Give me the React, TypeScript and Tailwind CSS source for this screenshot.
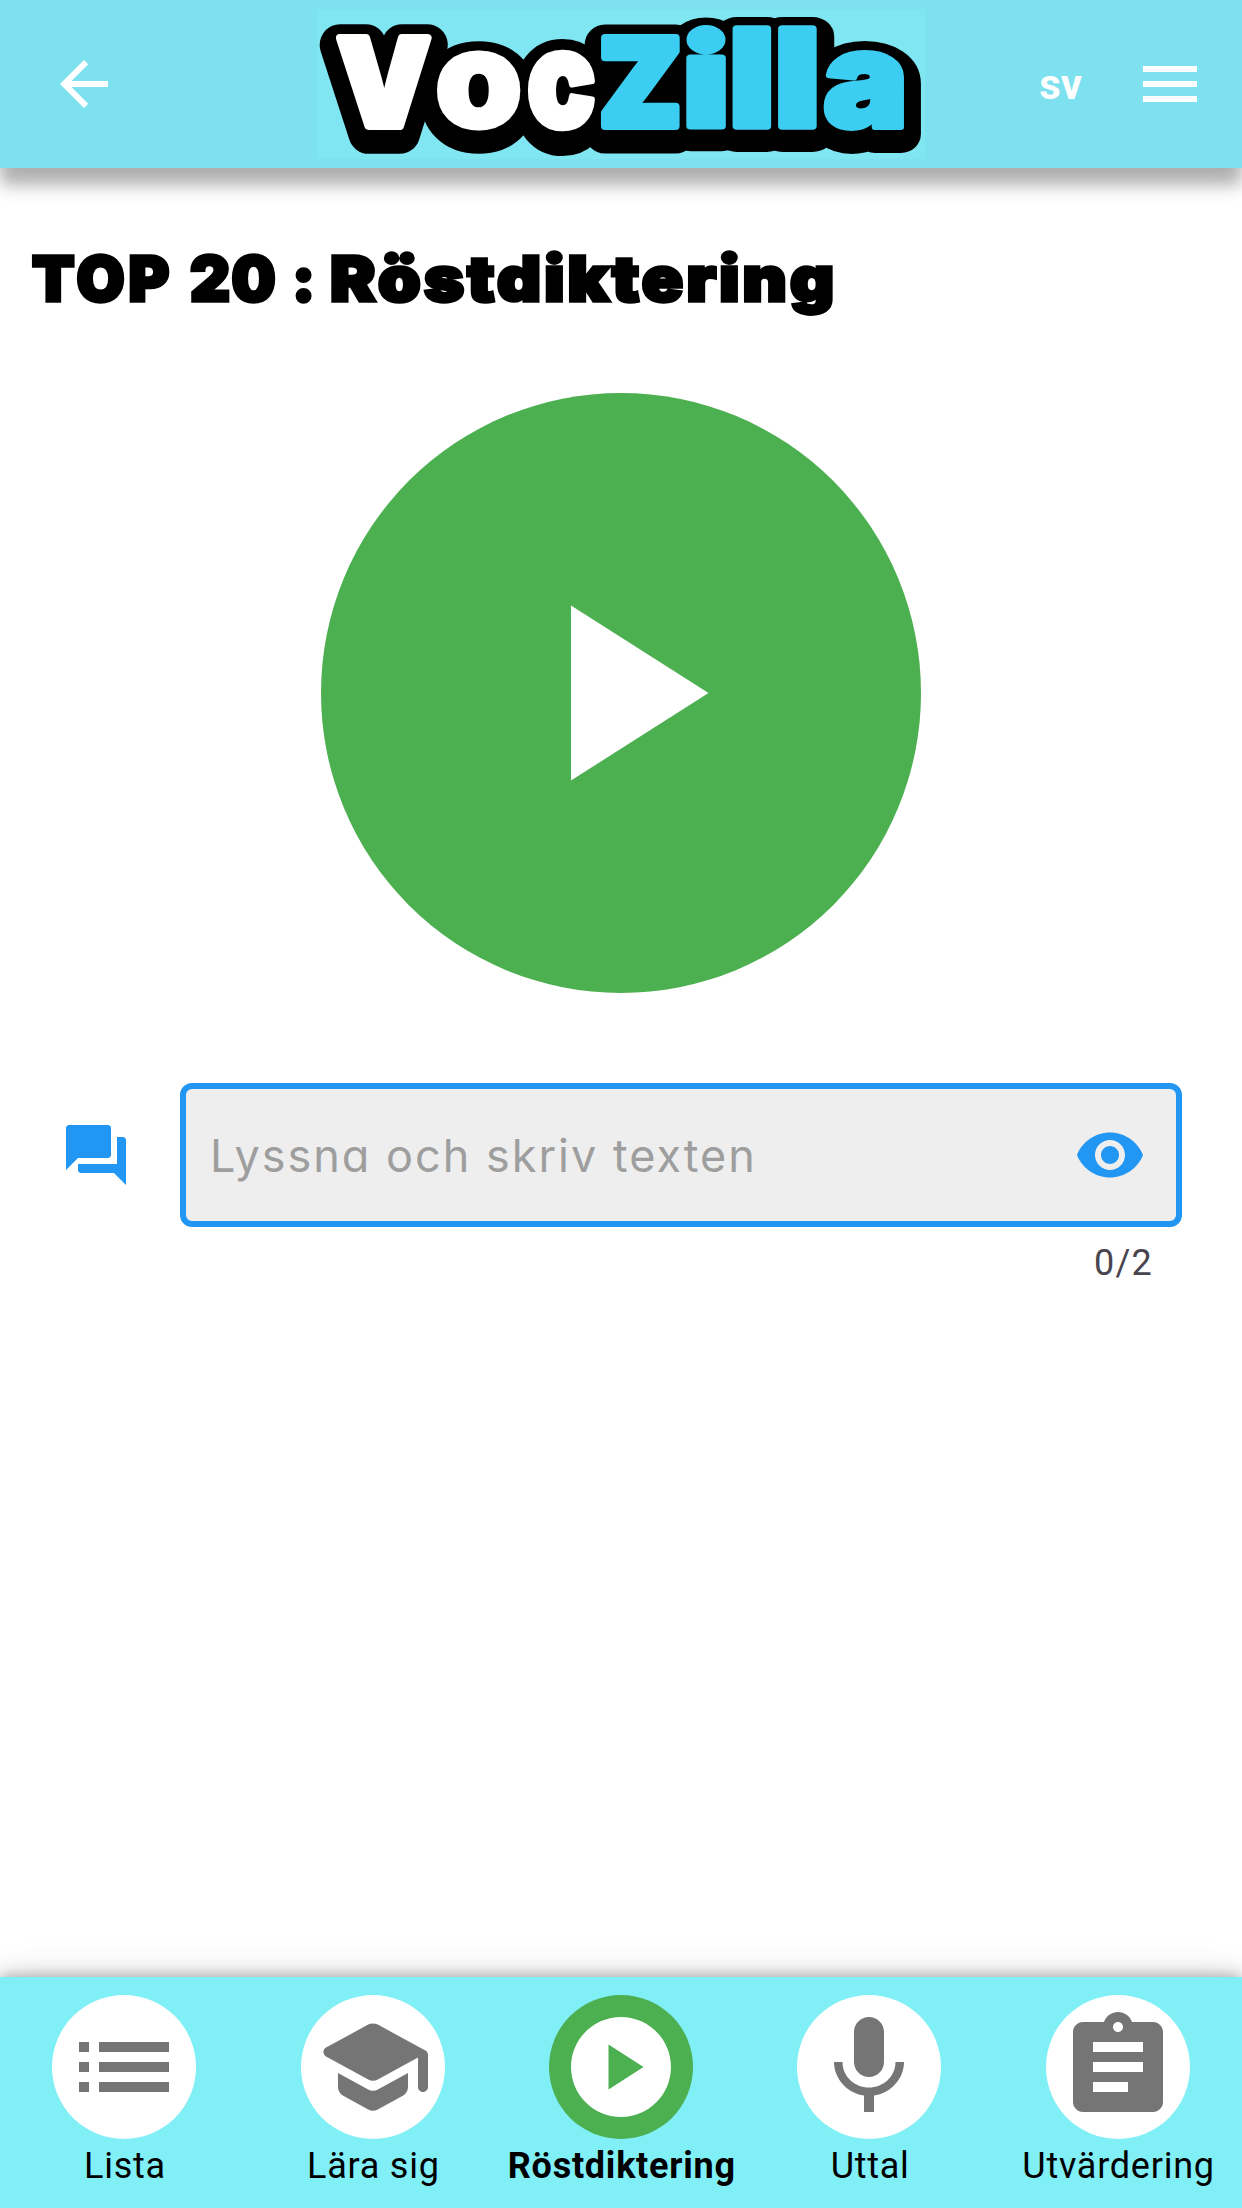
import React from "react";

type Glyph = {
  char: string;
  x: number;
  y: number;
  sx: number;
  sy: number;
  weight: number;
  fill: string;
};

const WHITE = "#ffffff";
const BLUE = "#3ccef2";

const LOGO: Glyph[] = [
  { char: "V", x: 337.2, y: 126.2, sx: 1.17, sy: 1.205, weight: 8, fill: WHITE },
  { char: "o", x: 434.3, y: 128, sx: 1.42, sy: 1.38, weight: 3, fill: WHITE },
  { char: "c", x: 527.2, y: 127, sx: 1.13, sy: 1.34, weight: 6, fill: WHITE },
  { char: "Z", x: 599, y: 126.2, sx: 1.19, sy: 1.205, weight: 8, fill: BLUE },
  { char: "i", x: 682.9, y: 126.2, sx: 1.56, sy: 1.25, weight: 8, fill: BLUE },
  { char: "l", x: 729.2, y: 126.2, sx: 1.53, sy: 1.335, weight: 8, fill: BLUE },
  { char: "l", x: 774.7, y: 126.2, sx: 1.53, sy: 1.335, weight: 8, fill: BLUE },
  { char: "a", x: 823.2, y: 127, sx: 1.42, sy: 1.34, weight: 6, fill: BLUE },
];

function Logo() {
  return (
    <svg
      viewBox="317 9 608 150"
      className="h-[150px] w-[608px] overflow-visible bg-[#80e6f2] font-[Inter,sans-serif] text-[100px] font-black"
    >
      {LOGO.map((g, i) => (
        <text
          key={i}
          aria-hidden="true"
          transform={`translate(${g.x} ${g.y + 6.5}) scale(${g.sx} ${g.sy})`}
          fill="#000"
          stroke="#000"
          strokeWidth={g.weight + 33}
          strokeLinejoin="round"
          vectorEffect="non-scaling-stroke"
        >
          {g.char}
        </text>
      ))}
      {LOGO.map((g, i) => (
        <text
          key={i}
          transform={`translate(${g.x} ${g.y}) scale(${g.sx} ${g.sy})`}
          fill={g.fill}
          stroke={g.fill}
          strokeWidth={g.weight}
          strokeLinejoin="round"
          vectorEffect="non-scaling-stroke"
        >
          {g.char}
        </text>
      ))}
    </svg>
  );
}

function Icon({ d, className }: { d: string; className: string }) {
  return (
    <svg viewBox="0 0 24 24" fill="currentColor" className={className}>
      <path d={d} />
    </svg>
  );
}

const ICONS = {
  back: "M20 11H7.83l5.59-5.59L12 4l-8 8 8 8 1.41-1.41L7.83 13H20v-2z",
  menu: "M3 18h18v-2H3v2zm0-5h18v-2H3v2zm0-7v2h18V6H3z",
  play: "M8 5v14l11-7z",
  forum:
    "M21 6h-2v9H6v2c0 .55.45 1 1 1h11l4 4V7c0-.55-.45-1-1-1zm-4 6V3c0-.55-.45-1-1-1H3c-.55 0-1 .45-1 1v14l4-4h10c.55 0 1-.45 1-1z",
  eye: "M12 4.5C7 4.5 2.73 7.61 1 12c1.73 4.39 6 7.5 11 7.5s9.27-3.11 11-7.5c-1.73-4.39-6-7.5-11-7.5zM12 17c-2.76 0-5-2.24-5-5s2.24-5 5-5 5 2.24 5 5-2.24 5-5 5zm0-8c-1.66 0-3 1.34-3 3s1.34 3 3 3 3-1.34 3-3-1.34-3-3-3z",
  list: "M3 13h2v-2H3v2zm0 4h2v-2H3v2zm0-8h2V7H3v2zm4 4h14v-2H7v2zm0 4h14v-2H7v2zM7 7v2h14V7H7z",
  school:
    "M5 13.18v2.81c0 .73.4 1.41 1.04 1.76l5 2.73c.6.33 1.32.33 1.92 0l5-2.73c.64-.35 1.04-1.03 1.04-1.76v-2.81l-6.04 3.3c-.6.33-1.32.33-1.92 0L5 13.18zm6.04-9.66l-8.43 4.6c-.69.38-.69 1.38 0 1.76l8.43 4.6c.6.33 1.32.33 1.92 0L21 10.09V16c0 .55.45 1 1 1s1-.45 1-1V9.59c0-.37-.2-.7-.52-.88l-9.52-5.19c-.6-.32-1.32-.32-1.92 0z",
  playCircle:
    "M12 2C6.48 2 2 6.48 2 12s4.48 10 10 10 10-4.48 10-10S17.52 2 12 2zM9.5 16.5v-9l7 4.5-7 4.5z",
  mic: "M12 14c1.66 0 3-1.34 3-3V5c0-1.66-1.34-3-3-3S9 3.34 9 5v6c0 1.66 1.34 3 3 3zm5.3-3c0 3-2.54 5.1-5.3 5.1S6.7 14 6.7 11H5c0 3.41 2.72 6.23 6 6.72V21h2v-3.28c3.28-.48 6-3.3 6-6.72h-1.7z",
  assignment:
    "M19 3h-4.18C14.4 1.84 13.3 1 12 1c-1.3 0-2.4.84-2.82 2H5c-1.1 0-2 .9-2 2v14c0 1.1.9 2 2 2h14c1.1 0 2-.9 2-2V5c0-1.1-.9-2-2-2zm-7 0c.55 0 1 .45 1 1s-.45 1-1 1-1-.45-1-1 .45-1 1-1zm2 14H7v-2h7v2zm3-4H7v-2h10v2zm0-4H7V7h10v2z",
};

const TABS = [
  { label: "Lista", icon: ICONS.list },
  { label: "Lära sig", icon: ICONS.school },
  { label: "Röstdiktering", icon: ICONS.playCircle, active: true },
  { label: "Uttal", icon: ICONS.mic },
  { label: "Utvärdering", icon: ICONS.assignment },
];

export default function App() {
  return (
    <div className="flex h-[2208px] w-[1242px] flex-col overflow-hidden bg-white font-[Roboto,sans-serif]">
      <header className="relative z-10 grid h-[168px] shrink-0 grid-cols-[317px_608px_317px] items-center bg-[#7de1f0] text-white shadow-[0_17px_16px_rgba(0,0,0,0.3),0_6px_30px_rgba(0,0,0,0.04)]">
        <button className="ml-12 size-[72px]" aria-label="Tillbaka">
          <Icon d={ICONS.back} className="size-[72px]" />
        </button>
        <Logo />
        <div className="flex items-center justify-end pr-9">
          <span className="mt-0.5 mr-[52px] text-[42px] leading-[48px] font-bold">sv</span>
          <Icon d={ICONS.menu} className="size-[72px]" />
        </div>
      </header>

      <main className="flex flex-1 flex-col">
        <h1 className="mt-[71px] flex h-20 items-start pl-8 font-[Inter,sans-serif] text-[62px] leading-[80px] font-black whitespace-nowrap text-black [-webkit-text-stroke:3.5px_black]">
          <span className="w-[158px] tracking-[4px]">TOP</span>
          <span className="w-[102px] tracking-[1.5px]">20</span>
          <span className="w-[38px]">:</span>
          <span className="origin-left scale-x-110 tracking-[2.9px]">Röstdiktering</span>
        </h1>

        <button
          className="mt-[74px] flex size-[600px] items-center justify-center self-center rounded-full bg-[#4caf50] text-white"
          aria-label="Spela"
        >
          <Icon d={ICONS.play} className="size-[300px]" />
        </button>

        <div className="mt-[90px] flex h-36 items-center pr-[60px] pl-[60px]">
          <Icon d={ICONS.forum} className="size-[72px] text-[#2196f3]" />
          <div className="ml-12 flex h-36 flex-1 items-center justify-between rounded-xl border-[6px] border-[#2196f3] bg-[#eeeeee] pr-[30px] pl-[24px]">
            <span className="mt-px font-[Inter,sans-serif] text-[45px] leading-[56px] tracking-[2px] text-[#9e9e9e] [font-feature-settings:'cv11']">
              Lyssna och skriv texten
            </span>
            <Icon d={ICONS.eye} className="size-[72px] text-[#2196f3]" />
          </div>
        </div>
        <div className="mt-[15px] pr-[89px] text-right text-[36px] leading-[42px] tracking-[1.2px] text-[#49454f]">
          0/2
        </div>
      </main>

      <nav className="relative z-10 grid h-[231px] shrink-0 grid-cols-5 bg-[#80eff6] shadow-[0_0_15px_rgba(0,0,0,0.34),0_0_36px_rgba(0,0,0,0.14)]">
        {TABS.map((tab) => (
          <div key={tab.label} className="flex flex-col items-center pt-[18px]">
            <div
              className={
                tab.active
                  ? "flex size-36 items-center justify-center rounded-full bg-[#4caf50] text-white"
                  : "flex size-36 items-center justify-center rounded-full bg-white text-[#757575]"
              }
            >
              <Icon d={tab.icon} className="size-[120px]" />
            </div>
            <span
              className={
                tab.active
                  ? "mt-1.5 pl-[1.5px] text-[36px] leading-[42px] font-bold tracking-[0.75px] whitespace-nowrap text-black"
                  : "mt-1.5 pl-[1.5px] text-[36px] leading-[42px] tracking-[0.75px] whitespace-nowrap text-black"
              }
            >
              {tab.label}
            </span>
          </div>
        ))}
      </nav>
    </div>
  );
}
